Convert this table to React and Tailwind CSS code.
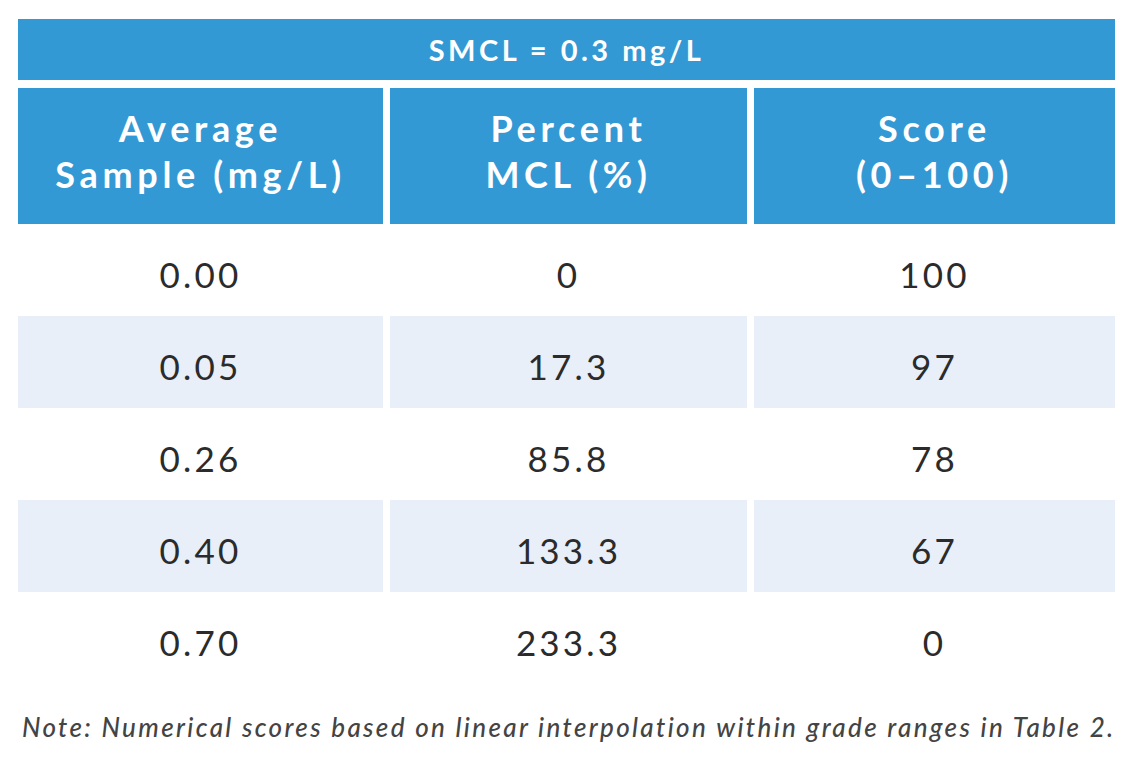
const rows = [
  ['0.00', '0', '100'],
  ['0.05', '17.3', '97'],
  ['0.26', '85.8', '78'],
  ['0.40', '133.3', '67'],
  ['0.70', '233.3', '0'],
]

export default function App() {
  return (
    <div className="w-[1135px] h-[771px] bg-white pl-[18px] pt-[19px] font-['Lato',sans-serif]">
      <div className="w-[1097px]">
        <div className="h-[61px] bg-[#3399d4] flex items-center justify-center text-white text-[29px] font-bold tracking-[0.12em]">
          SMCL = 0.3 mg/L
        </div>
        <div className="mt-[8px] grid grid-cols-[365px_357px_361px] gap-x-[7px]">
          <div className="h-[136px] pb-[10px] bg-[#3399d4] flex items-center justify-center text-center text-white text-[36px] font-bold leading-[46px] tracking-[0.13em]">
            <span>Average<br />Sample (mg/L)</span>
          </div>
          <div className="h-[136px] pb-[10px] bg-[#3399d4] flex items-center justify-center text-center text-white text-[36px] font-bold leading-[46px] tracking-[0.13em]">
            <span>Percent<br />MCL (%)</span>
          </div>
          <div className="h-[136px] pb-[10px] bg-[#3399d4] flex items-center justify-center text-center text-white text-[36px] font-bold leading-[46px] tracking-[0.13em]">
            <span>Score<br />(0–100)</span>
          </div>
          {rows.map((r, ri) =>
            r.map((c, ci) => (
              <div
                key={ri + '-' + ci}
                className={`h-[92px] pt-[8px] flex items-center justify-center text-[35px] tracking-[0.09em] text-[#2b2b2b] ${ri % 2 === 1 ? 'bg-[#e8eff8]' : 'bg-white'}`}
              >
                {c}
              </div>
            ))
          )}
        </div>
        <p className="mt-[24px] pl-[4px] italic font-medium text-[26px] tracking-[0.09em] text-[#444] whitespace-nowrap">
          Note: Numerical scores based on linear interpolation within grade ranges in Table 2.
        </p>
      </div>
    </div>
  )
}
